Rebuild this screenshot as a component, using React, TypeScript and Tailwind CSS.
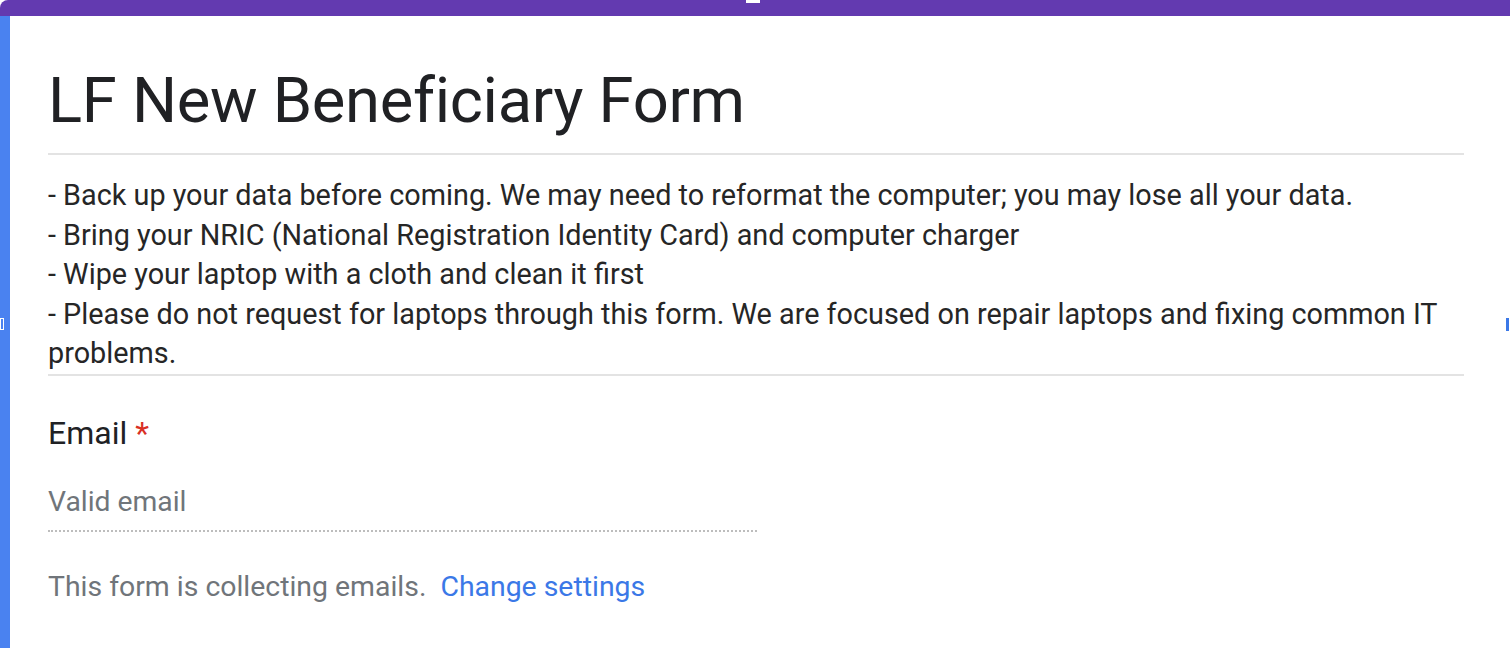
import React from "react";

export default function App() {
  return (
    <div className="relative w-[1510px] h-[648px] overflow-hidden bg-white font-['Roboto',sans-serif]">
      <div className="relative h-[16px] bg-[#633ab0] rounded-tl-[8px]">
        <div className="absolute left-[746px] top-0 w-[14px] h-[3px] bg-white" />
      </div>
      <div className="flex h-[632px]">
        <div className="w-[10px] shrink-0 bg-[#4a82f0]" />
        <div className="flex-1 pl-[38px] pr-[46px]">
          <h1 className="pt-[44px] text-[63.3px] leading-[80px] text-[#202124] tracking-[-0.3px]">
            LF New Beneficiary Form
          </h1>
          <div className="mt-[13px] h-[2px] bg-[#e3e3e3]" />
          <div className="pt-[21px] text-[28.8px] leading-[39.5px] text-[#262626]">
            <p>- Back up your data before coming. We may need to reformat the computer; you may lose all your data.</p>
            <p>- Bring your NRIC (National Registration Identity Card) and computer charger</p>
            <p>- Wipe your laptop with a cloth and clean it first</p>
            <p>
              - Please do not request for laptops through this form. We are focused on repair laptops and fixing common IT
              problems.
            </p>
          </div>
          <div className="h-[2px] bg-[#e3e3e3]" />
          <div className="pt-[37px] text-[32px] leading-[40px] text-[#202124]">
            Email <span className="text-[#d93025]">*</span>
          </div>
          <div className="w-[709px] mt-[33px] pb-[12px] border-b-2 border-dotted border-[#bdbdbd] text-[28.3px] leading-[32px] text-[#70757a]">
            Valid email
          </div>
          <div className="mt-[38px] text-[28.4px] leading-[34px] text-[#70757a]">
            This form is collecting emails.{" "}
            <span className="ml-[7px] text-[#3b78e7]">Change settings</span>
          </div>
        </div>
      </div>
      {/* resize handles */}
      <div className="absolute left-0 top-[318px] w-[4px] h-[12px] border border-white" />
      <div className="absolute right-[1px] top-[318px] w-[3px] h-[13px] bg-[#3b78e7]" />
    </div>
  );
}
